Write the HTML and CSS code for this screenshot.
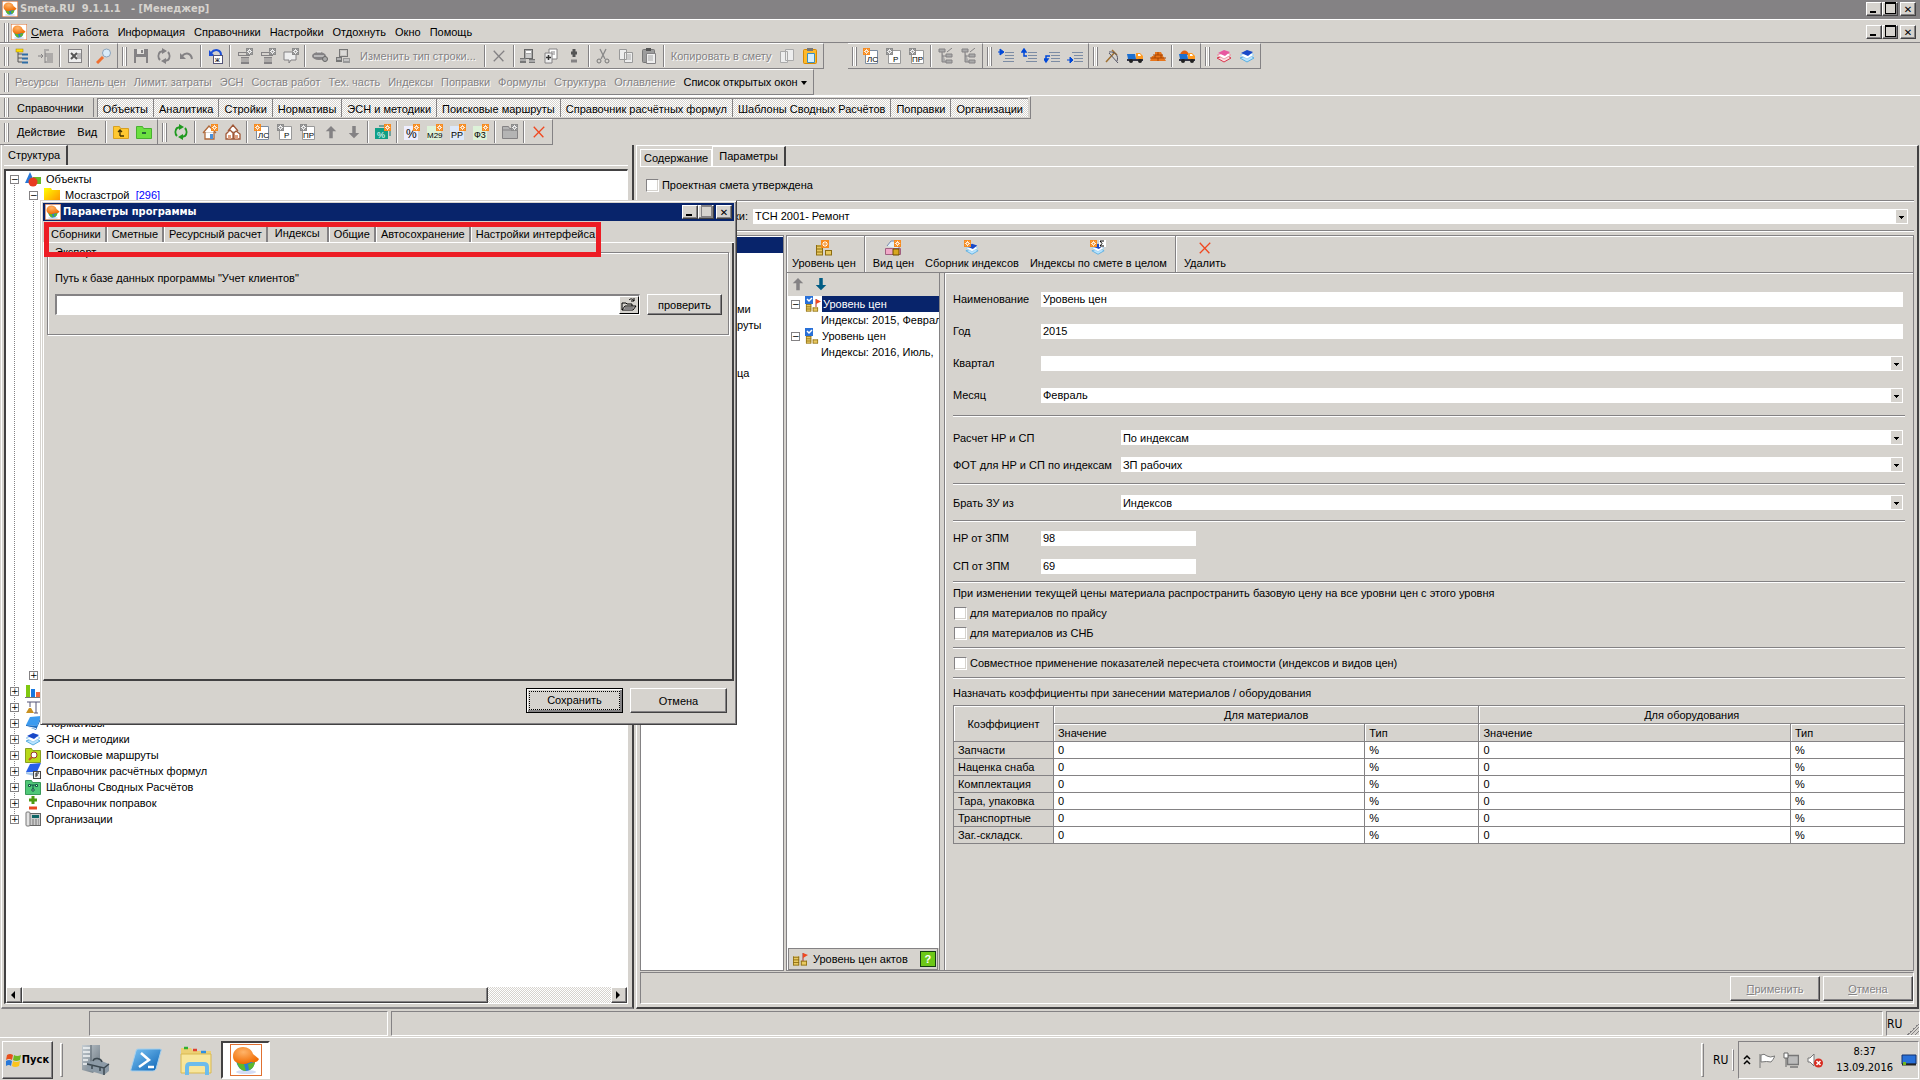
FILE: index.html
```html
<!DOCTYPE html>
<html lang="ru">

<head>
    <meta charset="UTF-8">
    <meta name="viewport" content="width=device-width, initial-scale=1.0">
    <title>Smeta.RU 9.1.1.1 - [Менеджер]</title>
    <link rel="stylesheet" href="styles.css">
</head>

<body>

    <!-- gradients -->
    <svg class="paints" aria-hidden="true">
        <defs>
            <radialGradient id="gOrange" cx="40%" cy="30%" r="70%"><stop offset="0" stop-color="#ffb469"/><stop offset="1" stop-color="#f06a00"/></radialGradient>
            <linearGradient id="gBlue" x1="0" y1="0" x2="1" y2="1"><stop offset="0" stop-color="#7cc4f4"/><stop offset="1" stop-color="#0a62b4"/></linearGradient>
            <linearGradient id="gFolder" x1="0" y1="0" x2="1" y2="1"><stop offset="0" stop-color="#ff0"/><stop offset="1" stop-color="#ff8a00"/></linearGradient>
            <linearGradient id="gSteel" x1="0" y1="0" x2="1" y2="1"><stop offset="0" stop-color="#c4ccd2"/><stop offset="1" stop-color="#66727c"/></linearGradient>
        </defs>
    </svg>

    <!-- icons -->
    <svg class="sprite" aria-hidden="true">
        <symbol id="logo" viewBox="0 0 32 32"><rect x=".5" y=".5" width="31" height="31" fill="#fff" stroke="#e07030"/><ellipse cx="16" cy="28" rx="10" ry="2" fill="#d4dcf4"/><path d="M6 16c1 7 5 11 10 11s8-4 9-9z" fill="#2a7fd0"/><path d="M7 18l7 2 2 7c-5 0-8-4-9-9zM18 20l7-2c-1 5-3 7-6 8z" fill="#5cb82a"/><path d="M3 12c0-5 4-9 10-9 5 0 9 3 10 7l6 5c-1 3-5 4-8 3-4 2-9 3-13 1-3-1-5-3-5-7z" fill="url(#gOrange)"/></symbol>
        <symbol id="new" viewBox="0 0 16 16"><rect width="16" height="16" fill="#f68b1f"/><path d="M8 2v12M2 8h12M4 4l8 8M12 4l-8 8" stroke="#fff" stroke-width="2"/><circle cx="8" cy="8" r="2" fill="#f68b1f"/></symbol>
        <symbol id="newg" viewBox="0 0 16 16"><rect width="16" height="16" fill="#8c8c8c"/><path d="M8 2v12M2 8h12M4 4l8 8M12 4l-8 8" stroke="#fff" stroke-width="2"/><circle cx="8" cy="8" r="2" fill="#8c8c8c"/></symbol>
        <symbol id="tree" viewBox="0 0 16 16"><rect x="1" y="1" width="7" height="3" fill="#ffe000" stroke="#a08000" stroke-width=".5"/><path d="M3 4v10h4M3 6h4M3 10h4" fill="none" stroke="#555"/><path d="M7 6.500h6M7 10.500h6M7 14.500h6" stroke="#2e6da4" stroke-width="2"/></symbol>
        <symbol id="treeg" viewBox="0 0 16 16"><path d="M0 8h5M3 6l2 2-2 2M6 2h5M7 3v12M7 6h8M7 8h8M9 10h6M9 12h6M7 14h8" fill="none" stroke="#848284"/></symbol>
        <symbol id="excel" viewBox="0 0 16 16"><rect x="1.500" y="1.500" width="13" height="13" fill="#eee" stroke="#848284"/><path d="M4 5l6 6M10 5l-6 6" stroke="#555" stroke-width="2"/><path d="M10 6h4M10 8h4M10 10h4" stroke="#848284"/></symbol>
        <symbol id="search" viewBox="0 0 16 16"><path d="M1 15l6-6" stroke="#f07030" stroke-width="3"/><circle cx="10.500" cy="5" r="4" fill="#d8ecfa" stroke="#8ca4bc"/></symbol>
        <symbol id="save" viewBox="0 0 16 16"><path d="M1 1h14v14H1z" fill="#848284"/><rect x="4" y="1" width="7" height="5" fill="#e4e2de"/><rect x="3" y="9" width="10" height="6" fill="#d6d3ce"/><path d="M9 2v3" stroke="#848284" stroke-width="2"/></symbol>
        <symbol id="sync" viewBox="0 0 16 16"><path d="M4 12a6 6 0 0 1 0-8l3-1M12 4a6 6 0 0 1 0 8l-3 1" fill="none" stroke="currentColor" stroke-width="2"/><path d="M6 0l5 3-5 3zM10 16l-5-3 5-3z" fill="currentColor"/></symbol>
        <symbol id="undo" viewBox="0 0 16 16"><path d="M3 8c4-4 9-3 10 3" fill="none" stroke="#848284" stroke-width="2"/><path d="M1 5v6h6z" fill="#848284"/></symbol>
        <symbol id="undoj" viewBox="0 0 16 16"><path d="M3 5c4-5 10-3 10 2" fill="none" stroke="#1c4fd6" stroke-width="2"/><path d="M1 2v6h6z" fill="#1c4fd6"/><rect x="5.500" y="7.500" width="9" height="8" fill="#fff" stroke="#557"/><text x="7" y="14" font-size="7">ж</text></symbol>
        <symbol id="rowg" viewBox="0 0 16 16"><rect x="1.500" y="4.500" width="11" height="3" fill="#d6d3ce" stroke="#848284"/><rect x="4" y="9" width="8" height="7" fill="#848284"/><path d="M4 11h8M4 13h8" stroke="#d6d3ce"/><use href="#newg" x="9" width="7" height="7"/></symbol>
        <symbol id="noteg" viewBox="0 0 16 16"><path d="M1 4h12v8H8l-2 3v-3H1z" fill="#eee" stroke="#848284"/><use href="#newg" x="9" width="7" height="7"/></symbol>
        <symbol id="eyeg" viewBox="0 0 16 16"><ellipse cx="7" cy="8" rx="7" ry="4" fill="#848284"/><path d="M2 8h10M5 4h4" stroke="#eee"/><circle cx="13" cy="11" r="2.500" fill="#aaa" stroke="#666"/></symbol>
        <symbol id="boxg" viewBox="0 0 16 16"><rect x="4.500" y="1.500" width="8" height="7" fill="#c8c6c2" stroke="#777"/><rect x="1" y="9" width="6" height="5" fill="#777"/><rect x="8" y="10" width="7" height="5" fill="#999"/><path d="M6 4h5M6 6h5M2 11h4M9 12h5" stroke="#eee"/></symbol>
        <symbol id="x" viewBox="0 0 16 16"><path d="M2 2l11 12M14 2L2 14" stroke="currentColor" stroke-width="1.500"/></symbol>
        <symbol id="calcg" viewBox="0 0 16 16"><rect x="4.500" y="1.500" width="8" height="9" fill="#aaa" stroke="#666"/><rect x="6" y="3" width="5" height="2" fill="#fff"/><path d="M6 7h5M6 9h5" stroke="#eee"/><rect x="0" y="10" width="6" height="5" fill="#777"/><rect x="9" y="11" width="6" height="4" fill="#777"/><path d="M0 12h6M9 13h6" stroke="#ddd"/></symbol>
        <symbol id="addpg" viewBox="0 0 16 16"><path d="M6 1h8v10H6z" fill="#fff" stroke="#848284"/><path d="M8 4h4M8 6h4" stroke="#848284"/><path d="M2 5h7v10H2z" fill="#eee" stroke="#848284"/><path d="M5.500 7v5M3 9.500h5" stroke="#333" stroke-width="1.500"/></symbol>
        <symbol id="pmg" viewBox="0 0 16 16"><path d="M8 1v8M5 5h6" stroke="#555" stroke-width="3"/><path d="M5 13h6" stroke="#848284" stroke-width="3"/></symbol>
        <symbol id="cut" viewBox="0 0 16 16"><path d="M5 1l5 10M11 1L6 11" stroke="#888" stroke-width="1.300"/><circle cx="4" cy="13" r="2" fill="none" stroke="#777"/><circle cx="12" cy="13" r="2" fill="none" stroke="#777"/></symbol>
        <symbol id="copyg" viewBox="0 0 16 16"><path d="M1.500 1.500h7v10h-7zM6.500 4.500h8v10h-8z" fill="#eee" stroke="#999"/><path d="M8 7h5M8 9h5M8 11h5" stroke="#aaa"/></symbol>
        <symbol id="pagesg" viewBox="0 0 16 16"><path d="M1.500 3.500h7v11h-7zM6.500 1.500h8v11h-8z" fill="#eee" stroke="#aaa"/></symbol>
        <symbol id="pasteg" viewBox="0 0 16 16"><rect x="1.500" y="1.500" width="12" height="13" rx="1" fill="#9c9c9c" stroke="#777"/><rect x="5" y="0" width="5" height="3" fill="#555"/><path d="M5.500 5.500h9v10h-9z" fill="#eee" stroke="#848284"/><path d="M7 8h5M7 10h5M7 12h5" stroke="#aaa"/></symbol>
        <symbol id="paste" viewBox="0 0 16 16"><rect x="1.500" y="1.500" width="13" height="14" rx="1" fill="#fdb92a" stroke="#d98a00"/><rect x="5" y="0" width="6" height="3" fill="#777"/><path d="M5.500 5.500h7v9h-7z" fill="#d5efff" stroke="#3a8fc0"/></symbol>
        <symbol id="ls" viewBox="0 0 16 16"><path d="M2.500 2.500h12v13h-12z" fill="#fff" stroke="#7c8ca0"/><text x="4" y="14" font-size="8">ЛС</text><use href="#new" width="7" height="7"/></symbol>
        <symbol id="rr" viewBox="0 0 16 16"><path d="M2.500 2.500h12v13h-12z" fill="#fff" stroke="#999"/><text x="7" y="14" font-size="8">Р</text><use href="#newg" width="7" height="7"/></symbol>
        <symbol id="pr" viewBox="0 0 16 16"><path d="M2.500 2.500h12v13h-12z" fill="#fff" stroke="#999"/><text x="3" y="14" font-size="8">ПР</text><use href="#newg" width="7" height="7"/></symbol>
        <symbol id="strg" viewBox="0 0 16 16"><path d="M1 1h6v3H1zM4 4v10h4M4 8h4M8 6h6v3H8zM8 12h6v3H8zM9 4l5-4" fill="#aaa" stroke="#848284"/></symbol>
        <symbol id="ind1" viewBox="0 0 16 16"><path d="M7 4.500h9M7 7.500h9M7 10.500h9M5 13.500h11" stroke="#7c8ca4"/><path d="M0 4h5M2 1l4 3-4 3z" stroke="#0048d8" fill="#0048d8"/></symbol>
        <symbol id="ind2" viewBox="0 0 16 16"><path d="M7 4.500h9M7 7.500h9M7 10.500h9M5 13.500h11" stroke="#7c8ca4"/><path d="M3 2v6h3M1 4l2-3 2 3z" stroke="#0048d8" fill="none" stroke-width="1.500"/></symbol>
        <symbol id="ind3" viewBox="0 0 16 16"><path d="M5 4.500h11M7 7.500h9M7 10.500h9M7 13.500h9" stroke="#7c8ca4"/><path d="M6 8H2v5M0 11l2 3 2-3z" stroke="#0048d8" fill="none" stroke-width="1.500"/></symbol>
        <symbol id="ind4" viewBox="0 0 16 16"><path d="M5 4.500h11M7 7.500h9M7 10.500h9M7 13.500h9" stroke="#7c8ca4"/><path d="M0 12h4M3 9l3 3-3 3z" stroke="#0048d8" fill="#0048d8"/></symbol>
        <symbol id="sickle" viewBox="0 0 16 16"><path d="M2 14L11 4M8 2l5 5" stroke="#a07030" stroke-width="1.500"/><path d="M5 4c6-1 10 4 8 9M5 5l9 10" fill="none" stroke="#556"/></symbol>
        <symbol id="truck" viewBox="0 0 16 16"><path d="M0 6h8l1 5H1z" fill="#1c6fd0"/><path d="M9 5h4l3 3v4H9z" fill="#ff9a20"/><path d="M11 6h2l1 2h-3z" fill="#fff"/><path d="M0 11h16v2H0z" fill="#334"/><circle cx="4" cy="13" r="2" fill="#222"/><circle cx="13" cy="13" r="2" fill="#222"/></symbol>
        <symbol id="bricks" viewBox="0 0 16 16"><path d="M5 4h6l2 4 3 5H0l2-5h3z" fill="#e8761c"/><path d="M0 10h16M3 7h10M8 4v3M5 7v3M11 7v3M8 10v3" stroke="#a84400"/></symbol>
        <symbol id="truckb" viewBox="0 0 16 16"><path d="M1 7c1-6 8-6 9 0z" fill="#e06010"/><use href="#truck" width="16" height="16"/></symbol>
        <symbol id="bookr" viewBox="0 0 16 16"><path d="M1 10l7 4 7-4-5-3z" fill="#ffdce2" stroke="#d8344c"/><path d="M1 7l7 4 7-4-5-3z" fill="#fff" stroke="#e8a0ac"/><path d="M2 5l6-3 6 2-5 4z" fill="#e858a0"/></symbol>
        <symbol id="book" viewBox="0 0 16 16"><path d="M1 10l7 4 7-4-5-3z" fill="#b8e4ff" stroke="#5aaee0"/><path d="M1 7l7 4 7-4-5-3z" fill="#fff" stroke="#a0d0f0"/><path d="M2 5l6-3 6 2-5 4z" fill="#1848c8"/></symbol>
        <symbol id="fup" viewBox="0 0 16 16"><path d="M.5 2.500h6l1 2h8v10H.5z" fill="#ffc830" stroke="#d8a020"/><path d="M7 12V6M5 8l2-2 2 2M7 12h4" fill="none" stroke="#443300" stroke-width="1.300"/></symbol>
        <symbol id="fmin" viewBox="0 0 16 16"><path d="M.5 2.500h6l1 2h8v10H.5z" fill="#6ce040" stroke="#48b030"/><path d="M6 9h4" stroke="#143" stroke-width="1.500"/></symbol>
        <symbol id="house" viewBox="0 0 16 16"><path d="M1 9l6-7 7 7M3 8v7h9V8" fill="#fff" stroke="#b06838" stroke-width="1.300"/><path d="M8 10h3v5H8z" fill="#4a90d8"/><use href="#new" x="9" width="7" height="7"/></symbol>
        <symbol id="houses" viewBox="0 0 16 16"><path d="M3 7l5-6 5 6M1 10l4-4 4 4v5H1zM8 10l3-3 4 3v5H8z" fill="#fff" stroke="#a05838" stroke-width="1.300"/><path d="M3 11h3v4H3zM10 11h3v4h-3z" fill="#e0a080"/></symbol>
        <symbol id="up" viewBox="0 0 16 16"><path d="M8 1l6 6h-4v8H6V7H2z" fill="currentColor"/></symbol>
        <symbol id="down" viewBox="0 0 16 16"><path d="M8 15l6-6h-4V1H6v8H2z" fill="currentColor"/></symbol>
        <symbol id="pctf" viewBox="0 0 16 16"><path d="M0 4h13v11H0z" fill="#0f9f86"/><path d="M4 2h11v10" fill="none" stroke="#0f6f66"/><text x="2" y="14" font-size="9" fill="#fff">%</text><use href="#new" x="9" width="7" height="7"/></symbol>
        <symbol id="pct" viewBox="0 0 16 16"><path d="M0 2h14v14H0z" fill="#eef"/><text x="2" y="14" font-size="12">%</text><use href="#new" x="9" width="7" height="7"/></symbol>
        <symbol id="m29" viewBox="0 0 16 16"><path d="M0 2h14v14H0z" fill="#ddf2d8"/><text x="0" y="14" font-size="8">М29</text><use href="#new" x="9" width="7" height="7"/></symbol>
        <symbol id="rr2" viewBox="0 0 16 16"><path d="M0 2h14v14H0z" fill="#dde8fa"/><text x="1" y="14" font-size="9">РР</text><use href="#new" x="9" width="7" height="7"/></symbol>
        <symbol id="f3" viewBox="0 0 16 16"><path d="M0 2h14v14H0z" fill="#ddf2d8"/><text x="1" y="14" font-size="9">Ф3</text><use href="#new" x="9" width="7" height="7"/></symbol>
        <symbol id="foldg" viewBox="0 0 16 16"><path d="M.5 2.500h6l1 2h8v10H.5z" fill="#b4b4b4" stroke="#848284"/><path d="M1 6h14" stroke="#848284"/><use href="#newg" x="9" width="7" height="7"/></symbol>
        <symbol id="shapes" viewBox="0 0 16 16"><path d="M0 12L5 1l5 11z" fill="#2878d8"/><rect x="8" y="6" width="8" height="7" fill="#68b828"/><circle cx="8" cy="11" r="4.500" fill="#e83c20"/></symbol>
        <symbol id="folder" viewBox="0 0 16 16"><path d="M0 1h7l1 2h8v13H0z" fill="url(#gFolder)"/></symbol>
        <symbol id="chart" viewBox="0 0 16 16"><path d="M1 2h4v12H1z" fill="#80c810"/><path d="M6 6h4v8H6z" fill="#1878e0"/><path d="M11 9h4v5h-4z" fill="#f06840"/><path d="M0 14.500h16" stroke="#777"/></symbol>
        <symbol id="crane" viewBox="0 0 16 16"><path d="M11 3v11M2 3h13M5 3v5M9 14h4" stroke="#557" /><path d="M1 14l3-5h2l3 5z" fill="#c89020"/></symbol>
        <symbol id="bookb" viewBox="0 0 16 16"><path d="M5 2l11-1-4 10L1 10z" fill="#3a9af0"/><path d="M1 10l11 1 4-10v3l-5 11-10-4z" fill="#1c6cc0"/><path d="M1 11l10 2v1L1 12z" fill="#fff"/></symbol>
        <symbol id="bookf" viewBox="0 0 16 16"><path d="M5 1l11-1-4 9L1 9z" fill="#2860e8"/><path d="M1 9l8 1v3l-8-2z" fill="#a8c8e8"/><rect x="8.500" y="8.500" width="7" height="7" fill="#eee" stroke="#444"/><path d="M11 14v-4h3M11 12h2" fill="none" stroke="#222"/></symbol>
        <symbol id="fsearch" viewBox="0 0 16 16"><path d="M.5 1.500h6l1 2h8v12H.5z" fill="#b8d818" stroke="#88a020"/><circle cx="9" cy="8" r="3" fill="#fff" stroke="#933"/><path d="M7 10l-3 3" stroke="#c06020" stroke-width="2"/></symbol>
        <symbol id="fscheme" viewBox="0 0 16 16"><path d="M.5 1.500h6l1 2h8v12H.5z" fill="#50c878" stroke="#389858"/><path d="M3.500 5.500h2v2h-2zM10.500 5.500h2v2h-2zM7 10h2v2H7zM6 6h4M8 6v4" fill="#dfd" stroke="#154"/></symbol>
        <symbol id="pm" viewBox="0 0 16 16"><path d="M8 1v8M4 5h8" stroke="#4c9a10" stroke-width="3"/><path d="M4 13h8" stroke="#e84820" stroke-width="3"/></symbol>
        <symbol id="phone" viewBox="0 0 16 16"><rect x="3.500" y="2.500" width="12" height="12" fill="#ccc" stroke="#666"/><rect x="1" y="1" width="4" height="14" rx="1" fill="#e4e4e4" stroke="#777"/><rect x="7" y="4" width="7" height="3" fill="#166"/><path d="M7 9h7M7 11h7M7 13h7" stroke="#777" stroke-dasharray="2 1"/></symbol>
        <symbol id="coins" viewBox="0 0 16 16"><path d="M0 5h7v10H0zM9 10h7v5H9z" fill="#e8c860"/><path d="M0 6h7M0 9h7M0 12h7M0 15h7M9 10.500h7M9 15h7M.5 5v10M6.500 5v10M9.500 10v5M15.500 10v5" stroke="#8c6c10"/></symbol>
        <symbol id="lvl" viewBox="0 0 16 16"><use href="#coins" width="16" height="16"/><use href="#new" x="5" width="8" height="8"/></symbol>
        <symbol id="kind" viewBox="0 0 16 16"><path d="M2 6l4-5h8v8" fill="#e0f0fa" stroke="#78a"/><path d="M.5 8.500h15v6H.5z" fill="#f0a8c8" stroke="#a06080"/><path d="M8 9h6v6H8z" fill="#d8a820" stroke="#6c4c00"/><use href="#new" x="9" width="7" height="7"/></symbol>
        <symbol id="ibook" viewBox="0 0 16 16"><use href="#book" y="2" width="16" height="14"/><use href="#new" width="7" height="7"/></symbol>
        <symbol id="isum" viewBox="0 0 16 16"><use href="#book" y="2" width="16" height="14"/><use href="#new" width="7" height="7"/><rect x="9" width="7" height="7" fill="#fff"/><path d="M14 1h-4l2 2.500L10 6h4" fill="none" stroke="#000"/></symbol>
        <symbol id="price" viewBox="0 0 16 16"><use href="#coins" y="4" width="14" height="12"/><rect width="8" height="8" fill="#2870d8"/><path d="M2 3l2 2 3-3" stroke="#fff" fill="none" stroke-width="1.500"/></symbol>
        <symbol id="pricef" viewBox="0 0 16 16"><use href="#price" width="16" height="16"/><path d="M11 3v8" stroke="#a33"/><path d="M11 3l5 2.500-5 2.500z" fill="#f04820"/></symbol>
        <symbol id="flag" viewBox="0 0 16 16"><use href="#coins" width="14" height="16"/><path d="M10 2v8" stroke="#a33"/><path d="M10 2l5 2-5 3z" fill="#f04820"/></symbol>
        <symbol id="open" viewBox="0 0 16 16"><path d="M1 13V6h4l1 1h5v2M1 13l3-4h11l-3 4zM8 3c2-2 4-1 5 1M13 1v3h-3" fill="none" stroke="#000"/><path d="M4 10h9l-2 3H3z" fill="#848284"/></symbol>
        <symbol id="win" viewBox="0 0 16 16"><path d="M1 3q3-2 6 0l-1 5q-3-2-6 0z" fill="#e8501c"/><path d="M8 3q3 2 7 0l-1 5q-4 2-7 0z" fill="#70b820"/><path d="M0 9q3-2 6 0l-1 5q-2-2-5 0z" fill="#2878d8"/><path d="M7 9q3 2 7 0l-1 5q-4 2-7 0z" fill="#fcc41c"/></symbol>
        <symbol id="server" viewBox="0 0 32 32"><path d="M2 1h18v20l-7 8-11-3z" fill="url(#gSteel)"/><path d="M3 4h7M3 8h7M3 12h7M3 16h5M3 20h4" stroke="#f4f6f8" stroke-width="1.500"/><path d="M11 1v24" stroke="#56626c"/><path d="M7 18l12-2 10 4v7l-5 4-17-5z" fill="#8c9aa6"/><path d="M7 20l17 4 5-4M24 24v7M13 17c1-4 8-3 9 1M12 21v4M20 23v4" fill="none" stroke="#3c4850" stroke-width="1.500"/></symbol>
        <symbol id="ps" viewBox="0 0 32 32"><path d="M8 5h22q2 0 1 2l-5 18q-1 2-3 2H2q-2 0-1-2L6 7q0-2 2-2z" fill="url(#gBlue)" stroke="#a8d0ec"/><path d="M11 9l8 7-10 7M18 23h6" fill="none" stroke="#fff" stroke-width="2.500"/></symbol>
        <symbol id="explorer" viewBox="0 0 32 32"><path d="M1 4h10l2 3h18v22H1z" fill="#ecd074"/><path d="M1 10h30v19H1z" fill="#f8e69c" stroke="#d8b850"/><path d="M4 4h4" stroke="#30b030" stroke-width="2.500"/><path d="M13 6h4" stroke="#e04030" stroke-width="2.500"/><path d="M21 8h5" stroke="#3090e0" stroke-width="2.500"/><path d="M7 31v-8q0-3 3-3h14q3 0 3 3v8" fill="none" stroke="#6cbcec" stroke-width="4"/></symbol>
        <symbol id="tflag" viewBox="0 0 16 16"><path d="M1 2v14" stroke="#777"/><path d="M2 3q3-2 6 1 3 2 8 0-2 4-4 6-4-1-10 0z" fill="#fff" stroke="#777"/></symbol>
        <symbol id="net" viewBox="0 0 16 16"><path d="M4.500 3.500h11v9h-11zM7 15h8" fill="#bbb" stroke="#777" stroke-width="1.500"/><path d="M1 1h4v5H1zM3 6v9" fill="#fff" stroke="#666"/></symbol>
        <symbol id="vol" viewBox="0 0 16 16"><path d="M1 6h2l4-4v12l-4-4H1z" fill="#fff" stroke="#777"/><circle cx="11.500" cy="11" r="4.500" fill="#d82c20"/><path d="M9.500 9l4 4M13.500 9l-4 4" stroke="#fff" stroke-width="1.500"/></symbol>
        <symbol id="desk" viewBox="0 0 16 16"><path d="M1 3h14v9H1z" fill="#2870d8" stroke="#103070"/><path d="M1 12.500h14" stroke="#222" stroke-width="2"/><path d="M2 10h3v3H2z" fill="#70b820"/></symbol>
    </svg>

    <header class="titlebar">
        <svg class="icon"><use href="#logo"/></svg>
        <h1>Smeta.RU&nbsp; 9.1.1.1&nbsp;&nbsp; - [Менеджер]</h1>
        <div class="winbtns">
            <button class="wb min" aria-label="Свернуть"></button>
            <button class="wb max" aria-label="Восстановить"></button>
            <button class="wb close" aria-label="Закрыть">✕</button>
        </div>
    </header>

    <nav class="menubar">
        <span class="grip"></span>
        <svg class="icon"><use href="#logo"/></svg>
        <button><u>С</u>мета</button>
        <button>Работа</button>
        <button>Информация</button>
        <button>Справочники</button>
        <button>Настройки</button>
        <button>Отдохнуть</button>
        <button>Окно</button>
        <button>Помощь</button>
        <div class="winbtns">
            <button class="wb min" aria-label="Свернуть окно"></button>
            <button class="wb max" aria-label="Восстановить окно"></button>
            <button class="wb close" aria-label="Закрыть окно">✕</button>
        </div>
    </nav>

    <div class="bar">
        <div class="tools">
            <span class="grip"></span>
            <button class="tb"><svg class="icon"><use href="#tree"/></svg></button>
            <button class="tb"><svg class="icon"><use href="#treeg"/></svg></button>
            <span class="sep"></span>
            <button class="tb"><svg class="icon"><use href="#excel"/></svg></button>
            <span class="sep"></span>
            <button class="tb"><svg class="icon"><use href="#search"/></svg></button>
        </div>
        <div class="tools">
            <span class="grip"></span>
            <button class="tb"><svg class="icon"><use href="#save"/></svg></button>
            <button class="tb gray"><svg class="icon"><use href="#sync"/></svg></button>
            <button class="tb"><svg class="icon"><use href="#undo"/></svg></button>
            <span class="sep"></span>
            <button class="tb"><svg class="icon"><use href="#undoj"/></svg></button>
            <span class="sep"></span>
            <button class="tb"><svg class="icon"><use href="#rowg"/></svg></button>
            <button class="tb"><svg class="icon"><use href="#rowg"/></svg></button>
            <button class="tb"><svg class="icon"><use href="#noteg"/></svg></button>
            <span class="sep"></span>
            <button class="tb"><svg class="icon"><use href="#eyeg"/></svg></button>
            <button class="tb"><svg class="icon"><use href="#boxg"/></svg></button>
            <button class="txt wide" disabled>Изменить тип строки...</button>
            <span class="sep"></span>
            <button class="tb gray"><svg class="icon small"><use href="#x"/></svg></button>
            <span class="sep"></span>
            <button class="tb"><svg class="icon"><use href="#calcg"/></svg></button>
            <button class="tb"><svg class="icon"><use href="#addpg"/></svg></button>
            <button class="tb"><svg class="icon"><use href="#pmg"/></svg></button>
            <span class="sep"></span>
            <button class="tb"><svg class="icon"><use href="#cut"/></svg></button>
            <button class="tb"><svg class="icon"><use href="#copyg"/></svg></button>
            <button class="tb"><svg class="icon"><use href="#pasteg"/></svg></button>
            <span class="sep"></span>
            <button class="txt" disabled>Копировать в смету</button>
            <button class="tb"><svg class="icon"><use href="#pagesg"/></svg></button>
            <button class="tb"><svg class="icon"><use href="#paste"/></svg></button>
        </div>
        <div class="tools apart">
            <span class="grip"></span>
            <button class="tb"><svg class="icon"><use href="#ls"/></svg></button>
            <button class="tb"><svg class="icon"><use href="#rr"/></svg></button>
            <button class="tb"><svg class="icon"><use href="#pr"/></svg></button>
            <span class="sep"></span>
            <button class="tb"><svg class="icon"><use href="#strg"/></svg></button>
            <button class="tb"><svg class="icon"><use href="#strg"/></svg></button>
        </div>
        <div class="tools">
            <span class="grip"></span>
            <button class="tb"><svg class="icon"><use href="#ind1"/></svg></button>
            <button class="tb"><svg class="icon"><use href="#ind2"/></svg></button>
            <button class="tb"><svg class="icon"><use href="#ind3"/></svg></button>
            <button class="tb"><svg class="icon"><use href="#ind4"/></svg></button>
        </div>
        <div class="tools">
            <span class="grip"></span>
            <button class="tb"><svg class="icon"><use href="#sickle"/></svg></button>
            <button class="tb"><svg class="icon"><use href="#truck"/></svg></button>
            <button class="tb"><svg class="icon"><use href="#bricks"/></svg></button>
            <span class="sep"></span>
            <button class="tb"><svg class="icon"><use href="#truckb"/></svg></button>
        </div>
        <div class="tools">
            <span class="grip"></span>
            <button class="tb"><svg class="icon"><use href="#bookr"/></svg></button>
            <button class="tb"><svg class="icon"><use href="#book"/></svg></button>
        </div>
    </div>

    <div class="bar">
        <div class="tools">
            <span class="grip"></span>
            <button class="txt" disabled>Ресурсы</button>
            <button class="txt" disabled>Панель цен</button>
            <button class="txt" disabled>Лимит. затраты</button>
            <button class="txt" disabled>ЭСН</button>
            <button class="txt" disabled>Состав работ</button>
            <button class="txt" disabled>Тех. часть</button>
            <button class="txt" disabled>Индексы</button>
            <button class="txt" disabled>Поправки</button>
            <button class="txt" disabled>Формулы</button>
            <button class="txt" disabled>Структура</button>
            <button class="txt" disabled>Оглавление</button>
            <button class="txt">Список открытых окон <span class="caret"></span></button>
        </div>
    </div>

    <div class="bar views">
        <div class="tools">
            <span class="grip"></span>
            <button class="view current">Справочники</button>
            <button class="view">Объекты</button>
            <button class="view">Аналитика</button>
            <button class="view">Стройки</button>
            <button class="view">Нормативы</button>
            <button class="view">ЭСН и методики</button>
            <button class="view">Поисковые маршруты</button>
            <button class="view">Справочник расчётных формул</button>
            <button class="view">Шаблоны Сводных Расчётов</button>
            <button class="view">Поправки</button>
            <button class="view">Организации</button>
        </div>
    </div>

    <div class="bar">
        <div class="tools">
            <span class="grip"></span>
            <button class="txt wide">Действие</button>
            <button class="txt wide">Вид</button>
            <span class="sep"></span>
            <button class="tb"><svg class="icon"><use href="#fup"/></svg></button>
            <button class="tb"><svg class="icon"><use href="#fmin"/></svg></button>
        </div>
        <div class="tools">
            <span class="grip"></span>
            <button class="tb green"><svg class="icon"><use href="#sync"/></svg></button>
            <span class="sep"></span>
            <button class="tb"><svg class="icon"><use href="#house"/></svg></button>
            <button class="tb"><svg class="icon"><use href="#houses"/></svg></button>
            <span class="sep"></span>
            <button class="tb"><svg class="icon"><use href="#ls"/></svg></button>
            <button class="tb"><svg class="icon"><use href="#rr"/></svg></button>
            <button class="tb"><svg class="icon"><use href="#pr"/></svg></button>
            <button class="tb gray"><svg class="icon small"><use href="#up"/></svg></button>
            <button class="tb gray"><svg class="icon small"><use href="#down"/></svg></button>
            <span class="sep"></span>
            <button class="tb"><svg class="icon"><use href="#pctf"/></svg></button>
            <span class="sep"></span>
            <button class="tb"><svg class="icon"><use href="#pct"/></svg></button>
            <button class="tb"><svg class="icon"><use href="#m29"/></svg></button>
            <button class="tb"><svg class="icon"><use href="#rr2"/></svg></button>
            <button class="tb"><svg class="icon"><use href="#f3"/></svg></button>
            <span class="sep"></span>
            <button class="tb"><svg class="icon"><use href="#foldg"/></svg></button>
            <span class="sep"></span>
            <button class="tb red"><svg class="icon small"><use href="#x"/></svg></button>
        </div>
    </div>

    <main class="workspace">
        <section class="left">
            <div class="tabs"><button class="tab active">Структура</button></div>
            <div class="tree-frame">
                <ul class="tree root">
                    <li><span class="exp">−</span><svg class="icon"><use href="#shapes"/></svg>Объекты</li>
                    <li class="sub"><span class="exp">−</span><svg class="icon"><use href="#folder"/></svg>Мосгазстрой  <span class="count">[296]</span></li>
                    <li class="gap"></li>
                    <li class="sub"><span class="exp">+</span></li>
                    <li><span class="exp">+</span><svg class="icon"><use href="#chart"/></svg></li>
                    <li><span class="exp">+</span><svg class="icon"><use href="#crane"/></svg></li>
                    <li><span class="exp">+</span><svg class="icon"><use href="#bookb"/></svg>Нормативы</li>
                    <li><span class="exp">+</span><svg class="icon"><use href="#book"/></svg>ЭСН и методики</li>
                    <li><span class="exp">+</span><svg class="icon"><use href="#fsearch"/></svg>Поисковые маршруты</li>
                    <li><span class="exp">+</span><svg class="icon"><use href="#bookf"/></svg>Справочник расчётных формул</li>
                    <li><span class="exp">+</span><svg class="icon"><use href="#fscheme"/></svg>Шаблоны Сводных Расчётов</li>
                    <li><span class="exp">+</span><svg class="icon"><use href="#pm"/></svg>Справочник поправок</li>
                    <li><span class="exp">+</span><svg class="icon"><use href="#phone"/></svg>Организации</li>
                </ul>
                <div class="hscroll">
                    <button class="arrow prev" aria-label="Влево"></button>
                    <div class="thumb"></div>
                    <button class="arrow next" aria-label="Вправо"></button>
                </div>
            </div>
        </section>

        <section class="right">
            <div class="tabs">
                <button class="tab">Содержание</button>
                <button class="tab active">Параметры</button>
            </div>
            <div class="approve">
                <label class="check"><input type="checkbox">Проектная смета утверждена</label>
            </div>
            <div class="norms">
                <label for="norms">Поправки:</label>
                <select id="norms"><option>ТСН 2001- Ремонт</option></select>
            </div>

            <div class="panes">
                <ul class="sections">
                    <li class="selected"></li>
                    <li></li>
                    <li></li>
                    <li></li>
                    <li>ми</li>
                    <li>руты</li>
                    <li></li>
                    <li></li>
                    <li>ца</li>
                </ul>
                <div class="detail">
                    <div class="actions">
                        <button><svg class="icon"><use href="#lvl"/></svg>Уровень цен</button>
                        <span class="sep"></span>
                        <button><svg class="icon"><use href="#kind"/></svg>Вид цен</button>
                        <button><svg class="icon"><use href="#ibook"/></svg>Сборник индексов</button>
                        <button><svg class="icon"><use href="#isum"/></svg>Индексы по смете в целом</button>
                        <span class="sep"></span>
                        <button class="red"><svg class="icon small"><use href="#x"/></svg><span>Удалить</span></button>
                    </div>
                    <div class="split">
                        <div class="levels">
                            <div class="movers">
                                <button class="tb gray"><svg class="icon small"><use href="#up"/></svg></button>
                                <button class="tb teal"><svg class="icon small"><use href="#down"/></svg></button>
                            </div>
                            <ul class="tree">
                                <li><span class="exp">−</span><svg class="icon"><use href="#pricef"/></svg><span class="picked">Уровень цен</span></li>
                                <li class="leaf">Индексы: 2015, Февраль</li>
                                <li><span class="exp">−</span><svg class="icon"><use href="#price"/></svg>Уровень цен</li>
                                <li class="leaf">Индексы: 2016, Июль,</li>
                            </ul>
                            <div class="acts">
                                <svg class="icon"><use href="#flag"/></svg>
                                <span>Уровень цен актов</span>
                                <button class="help">?</button>
                            </div>
                        </div>

                        <form class="params">
                            <div class="group first">
                                <div class="field"><label for="name">Наименование</label><input type="text" id="name" value="Уровень цен"></div>
                                <div class="field"><label for="year">Год</label><input type="text" id="year" value="2015"></div>
                                <div class="field"><label for="quarter">Квартал</label><select id="quarter"><option></option></select></div>
                                <div class="field"><label for="month">Месяц</label><select id="month"><option>Февраль</option></select></div>
                            </div>
                            <div class="group mid">
                                <div class="field long"><label for="calc">Расчет НР и СП</label><select id="calc"><option>По индексам</option></select></div>
                                <div class="field long"><label for="fot">ФОТ для НР и СП по индексам</label><select id="fot"><option>ЗП рабочих</option></select></div>
                            </div>
                            <div class="group">
                                <div class="field long"><label for="zu">Брать ЗУ из</label><select id="zu"><option>Индексов</option></select></div>
                            </div>
                            <div class="group tight">
                                <div class="field short"><label for="nr">НР от ЗПМ</label><input type="text" id="nr" value="98"></div>
                                <div class="field short"><label for="sp">СП от ЗПМ</label><input type="text" id="sp" value="69"></div>
                            </div>
                            <div class="group flush">
                                <p>При изменении текущей цены материала распространить базовую цену на все уровни цен с этого уровня</p>
                                <label class="check"><input type="checkbox">для материалов по прайсу</label>
                                <label class="check"><input type="checkbox">для материалов из СНБ</label>
                            </div>
                            <div class="group">
                                <label class="check"><input type="checkbox">Совместное применение показателей пересчета стоимости (индексов и видов цен)</label>
                            </div>
                            <div class="group">
                                <p>Назначать коэффициенты при занесении материалов / оборудования</p>
                                <table class="coef">
                                    <colgroup><col class="c-name"><col class="c-val"><col class="c-type"><col class="c-val"><col class="c-type"></colgroup>
                                    <thead>
                                        <tr><th rowspan="2">Коэффициент</th><th colspan="2">Для материалов</th><th colspan="2">Для оборудования</th></tr>
                                        <tr class="subhead"><th>Значение</th><th>Тип</th><th>Значение</th><th>Тип</th></tr>
                                    </thead>
                                    <tbody>
                                        <tr><th>Запчасти</th><td>0</td><td>%</td><td>0</td><td>%</td></tr>
                                        <tr><th>Наценка снаба</th><td>0</td><td>%</td><td>0</td><td>%</td></tr>
                                        <tr><th>Комплектация</th><td>0</td><td>%</td><td>0</td><td>%</td></tr>
                                        <tr><th>Тара, упаковка</th><td>0</td><td>%</td><td>0</td><td>%</td></tr>
                                        <tr><th>Транспортные</th><td>0</td><td>%</td><td>0</td><td>%</td></tr>
                                        <tr><th>Заг.-складск.</th><td>0</td><td>%</td><td>0</td><td>%</td></tr>
                                    </tbody>
                                </table>
                            </div>
                        </form>
                    </div>
                </div>
            </div>

            <div class="confirm">
                <button class="btn" disabled><u>П</u>рименить</button>
                <button class="btn" disabled><u>О</u>тмена</button>
            </div>
        </section>
    </main>

    <div class="statusbar">
        <span class="cell one"></span>
        <span class="cell two"></span>
        <span class="cell lang">RU</span>
    </div>

    <footer class="taskbar">
        <button class="start"><svg class="icon"><use href="#win"/></svg>Пуск</button>
        <span class="divider"></span>
        <div class="quick">
            <button><svg class="icon big"><use href="#server"/></svg></button>
            <button><svg class="icon big"><use href="#ps"/></svg></button>
            <button><svg class="icon big"><use href="#explorer"/></svg></button>
            <button class="running"><svg class="icon big"><use href="#logo"/></svg></button>
        </div>
        <span class="divider end"></span>
        <span class="lang">RU</span>
        <span class="divider slim"></span>
        <div class="tray">
            <svg class="icon chevrons" viewBox="0 0 8 12"><path d="M1 5l3-3 3 3M1 10l3-3 3 3" fill="none" stroke="#000" stroke-width="1.500"/></svg>
            <svg class="icon"><use href="#tflag"/></svg>
            <svg class="icon"><use href="#net"/></svg>
            <svg class="icon"><use href="#vol"/></svg>
            <div class="clock">8:37<br>13.09.2016</div>
            <svg class="icon"><use href="#desk"/></svg>
        </div>
    </footer>

    <div class="dialog" role="dialog" aria-label="Параметры программы">
        <div class="dialog-title">
            <svg class="icon"><use href="#logo"/></svg>
            <h2>Параметры программы</h2>
            <div class="winbtns">
                <button class="wb min" aria-label="Свернуть"></button>
                <button class="wb max off" aria-label="Развернуть" disabled></button>
                <button class="wb close" aria-label="Закрыть">✕</button>
            </div>
        </div>
        <div class="dialog-tabs">
            <button>Сборники</button>
            <button>Сметные</button>
            <button>Ресурсный расчет</button>
            <button class="active">Индексы</button>
            <button>Общие</button>
            <button>Автосохранение</button>
            <button>Настройки интерфейса</button>
        </div>
        <div class="dialog-page">
            <fieldset>
                <legend>Экспорт</legend>
                <label for="dbpath">Путь к базе данных программы "Учет клиентов"</label>
                <div class="path-row">
                    <div class="path">
                        <input type="text" id="dbpath">
                        <button aria-label="Обзор"><svg class="icon"><use href="#open"/></svg></button>
                    </div>
                    <button class="btn">проверить</button>
                </div>
            </fieldset>
        </div>
        <div class="dialog-footer">
            <button class="btn default"><span>Сохранить</span></button>
            <button class="btn">Отмена</button>
        </div>
        <div class="marker"></div>
    </div>

</body>

</html>
```
FILE: styles.css
```css
* {
    box-sizing: border-box;
}

body {
    margin: 0;
    height: 100vh;
    display: flex;
    flex-direction: column;
    overflow: hidden;
    background: #d6d3ce;
    color: #000;
    font: 11px/14px "Liberation Sans", Arial, sans-serif;
}

h1,
h2,
p,
ul {
    margin: 0;
    padding: 0;
    list-style: none;
}

button,
input,
select {
    margin: 0;
    padding: 0;
    border: 0;
    border-radius: 0;
    background: none;
    color: inherit;
    font: inherit;
    white-space: nowrap;
}

.paints {
    position: absolute;
    width: 0;
    height: 0;
}

.sprite {
    display: none;
}

.icon {
    display: block;
    flex: none;
    width: 16px;
    height: 16px;
}

.icon.small {
    width: 14px;
    height: 14px;
}

.icon.big {
    width: 32px;
    height: 32px;
}

.gray { color: #848284; }
.green { color: #1f9a1f; }
.red { color: #f04820; }
.teal { color: #005c84; }

.clock,
.lang {
    font-family: "DejaVu Sans Condensed", "Noto Sans", sans-serif;
}

/* title bars */
.titlebar {
    display: flex;
    align-items: center;
    gap: 2px;
    height: 18px;
    padding: 0 4px 0 2px;
    background: #848284;
    color: #d6d3ce;
}

.titlebar h1,
.dialog-title h2 {
    font: bold 11px/16px "DejaVu Sans Condensed", "Noto Sans", sans-serif;
}

.winbtns {
    display: flex;
    margin-left: auto;
}

.wb {
    position: relative;
    width: 16px;
    height: 14px;
    background: #d6d3ce;
    color: #000;
    border: 1px solid;
    border-color: #fff #424142 #424142 #fff;
    box-shadow: inset -1px -1px #848284;
    font: bold 10px/11px "DejaVu Sans", sans-serif;
}

.wb.close {
    margin-left: 2px;
}

.wb.min::after,
.wb.max::after {
    content: "";
    position: absolute;
    left: 3px;
    bottom: 2px;
    width: 6px;
    height: 2px;
    background: #000;
}

.wb.max::after {
    width: 9px;
    height: 9px;
    bottom: 1px;
    left: 2px;
    background: none;
    border: 1px solid #000;
    border-top-width: 2px;
}

.wb.max.off::after {
    border-color: #848284;
}

/* menu and toolbars */
.menubar {
    display: flex;
    align-items: center;
    height: 25px;
    padding: 3px 4px 0;
    border: solid #848284;
    border-width: 1px 0;
    box-shadow: inset 0 1px #fff;
}

.menubar > button {
    padding: 0 5px 0 4px;
}

.grip {
    flex: none;
    width: 5px;
    height: 19px;
    margin-right: 2px;
    border: solid;
    border-width: 0 1px;
    border-color: #848284;
    box-shadow: inset 1px 0 #fff, inset -1px 0 #fff;
}

.bar {
    display: flex;
    height: 26px;
}

.tools {
    display: flex;
    align-items: center;
    padding: 0 2px 0 4px;
    border-top: 1px solid #fff;
    border-right: 1px solid #848284;
    border-bottom: 1px solid #848284;
}

.tools.apart {
    margin-left: 24px;
}

.tb {
    display: flex;
    flex: none;
    align-items: center;
    justify-content: center;
    width: 23px;
    height: 22px;
}

.sep {
    flex: none;
    width: 6px;
    height: 22px;
    border-left: 2px solid transparent;
    box-shadow: inset 1px 0 #848284, inset 2px 0 #fff;
}

.txt {
    padding: 0 4px;
}

.txt.wide {
    padding: 0 6px;
}

button:disabled {
    color: #848284;
    text-shadow: 1px 1px #fff;
}

.caret {
    display: inline-block;
    vertical-align: middle;
    border: solid transparent;
    border-width: 4px 3px 0;
    border-top-color: #000;
}

.views {
    height: 24px;
    border-top: 1px solid #fff;
}

.view {
    height: 19px;
    padding: 2px 5px 0;
    border-left: 1px solid #848284;
    border-top: 1px solid #848284;
    background: repeating-conic-gradient(#fff 0 25%, #d6d3ce 0 50%) 0 0 / 2px 2px;
}

.view.current {
    margin-right: 3px;
    padding: 0 9px 0 6px;
    border-width: 0 1px 0 0;
    border-right: 1px solid #848284;
    background: #d6d3ce;
}

/* workspace */
.workspace {
    display: flex;
    flex: 1;
    min-height: 0;
    gap: 2px;
    padding: 0 1px;
}

.left {
    display: flex;
    flex: 0 0 33%;
    flex-direction: column;
    padding: 0 4px 3px 2px;
    border-right: 2px solid #424142;
    border-bottom: 2px solid #848284;
    border-left: 1px solid #fff;
}

.tabs {
    display: flex;
    flex: none;
    align-items: flex-end;
    height: 21px;
    border-bottom: 1px solid #fff;
}

.tab {
    height: 17px;
    padding: 0 3px;
    border: solid #fff;
    border-width: 1px 1px 0;
}

.tab.active {
    height: 20px;
    padding: 0 6px 2px;
    border-right: 2px solid #424142;
}

.left .tab.active {
    padding-left: 4px;
    border-left: 0;
}

.tree-frame {
    display: flex;
    flex: 1;
    flex-direction: column;
    min-height: 0;
    margin-top: 3px;
    border: solid;
    border-width: 2px 1px 1px 2px;
    border-color: #424142 #fff #fff #424142;
    background: #fff;
}

.tree {
    flex: 1;
    min-height: 0;
    overflow: hidden;
    background: #fff;
}

.root {
    background: repeating-linear-gradient(#848284 0 1px, transparent 1px 2px) 8px 8px / 1px 640px no-repeat, repeating-linear-gradient(#848284 0 1px, transparent 1px 2px) 27px 24px / 1px 480px no-repeat, #fff;
}

.tree li {
    display: flex;
    align-items: center;
    height: 16px;
    padding-left: 4px;
    white-space: pre;
}

.tree .sub {
    padding-left: 23px;
}

.tree .gap {
    height: 464px;
}

.tree .leaf {
    padding-left: 34px;
}

.tree .icon {
    margin-right: 5px;
}

.exp {
    flex: none;
    width: 9px;
    height: 9px;
    margin-right: 6px;
    border: 1px solid #848284;
    background: #fff;
    font: 9px/7px "DejaVu Sans", sans-serif;
    text-align: center;
    box-shadow: 2px 0 #fff;
}

.count {
    color: #00f;
}

.hscroll {
    display: flex;
    height: 16px;
    background: repeating-conic-gradient(#fff 0 25%, #d6d3ce 0 50%) 0 0 / 2px 2px;
}

.thumb,
.arrow,
.btn {
    background: #d6d3ce;
    border: 1px solid;
    border-color: #fff #424142 #424142 #fff;
    box-shadow: inset -1px -1px #848284;
}

.thumb {
    width: 75%;
}

.arrow {
    width: 16px;
    padding-left: 4px;
}

.arrow.next {
    margin-left: auto;
}

.arrow::after {
    content: "";
    display: block;
    width: 0;
    border: solid transparent;
    border-width: 4px 0 4px 4px;
    border-left-color: #000;
}

.arrow.prev::after {
    border-width: 4px 4px 4px 0;
    border-right-color: #000;
}

.right {
    display: flex;
    flex: 1;
    flex-direction: column;
    min-width: 0;
    padding: 0 3px 3px;
    border: solid;
    border-width: 1px 2px 2px 1px;
    border-color: #fff #424142 #424142 #fff;
}

.approve {
    padding: 8px 6px 6px;
    border-bottom: 1px solid #fff;
    box-shadow: inset 0 -1px #848284;
}

.check {
    display: flex;
    align-items: center;
    gap: 3px;
    height: 20px;
}

.check input {
    appearance: none;
    width: 13px;
    height: 13px;
    background: #fff;
    border: 1px solid;
    border-color: #848284 #fff #fff #848284;
    box-shadow: inset -1px -1px #d6d3ce;
}

.norms {
    display: flex;
    align-items: center;
    gap: 5px;
    height: 30px;
    padding: 0 6px 1px 56px;
    border-bottom: 1px solid #fff;
    box-shadow: inset 0 -1px #848284;
}

.norms select {
    flex: 1;
}

input[type="text"],
select {
    height: 15px;
    padding: 0 2px;
    background: #fff;
}

/* small black arrow on a gray button at the right end */
select {
    appearance: none;
    background: linear-gradient(#000, #000) right 4px center / 5px 1px no-repeat, linear-gradient(#000, #000) right 5px top 8px / 3px 1px no-repeat, linear-gradient(#000, #000) right 6px top 9px / 1px 1px no-repeat, linear-gradient(#d6d3ce, #d6d3ce) right 1px center / 11px 13px no-repeat, #fff;
}

.panes {
    display: flex;
    flex: 1;
    min-height: 0;
    gap: 2px;
    margin-top: 3px;
}

.sections {
    flex: 0 0 144px;
    padding-top: 1px;
    border: 1px solid #848284;
    background: #fff;
}

.sections li {
    height: 16px;
    padding-left: 96px;
    line-height: 16px;
}

.sections .selected {
    background: #08246b;
}

.detail {
    display: flex;
    flex: 1;
    flex-direction: column;
    min-width: 0;
    border: 1px solid #848284;
    box-shadow: inset 1px 1px #fff;
}

.actions {
    display: flex;
    flex: none;
    height: 36px;
}

.actions button {
    padding: 2px 6px 0 5px;
}

.actions .icon {
    margin: 0 auto;
    height: 16px;
}

.actions span:not(.sep) {
    color: #000;
}

.actions .sep {
    height: 100%;
}

.split {
    display: flex;
    flex: 1;
    min-height: 0;
    gap: 4px;
    border-top: 1px solid #848284;
}

.levels {
    display: flex;
    flex: 0 0 153px;
    flex-direction: column;
    min-width: 0;
    border-right: 1px solid #848284;
}

.movers {
    display: flex;
    flex: none;
    height: 23px;
}

.levels .tree .icon {
    margin-right: 0;
}

.levels .tree li {
    gap: 1px;
}

.levels .tree .exp {
    margin-right: 4px;
}

.picked {
    flex: 1;
    padding-left: 1px;
    background: #08246b;
    color: #fff;
    line-height: 16px;
}

.acts {
    display: flex;
    align-items: center;
    gap: 4px;
    height: 22px;
    margin: 0 1px;
    padding: 0 1px 0 4px;
    border: 1px solid #848284;
    background: #d6d3ce;
}

.help {
    width: 16px;
    height: 16px;
    margin-left: auto;
    border: 1px solid #143c14;
    background: #6cc818;
    color: #fff;
    font-weight: bold;
}

/* parameters form */
.params {
    flex: 1;
    min-width: 0;
    padding: 0 8px;
    border-left: 1px solid #848284;
    box-shadow: inset 1px 1px #fff;
}

.group {
    padding: 5px 0 4px;
    border-top: 1px solid #848284;
    box-shadow: inset 0 1px #fff;
}

.group.first {
    padding-top: 10px;
    border-top: 0;
    box-shadow: none;
}

.group.mid {
    padding: 8px 0 5px;
}

.group.tight {
    padding: 3px 0 1px;
}

.group.flush {
    padding-top: 1px;
}

.group p {
    line-height: 20px;
}

.group .check {
    padding-left: 1px;
}

.field {
    display: grid;
    grid-template-columns: 88px 1fr;
    align-items: center;
    height: 27px;
    padding-right: 2px;
}

.first .field {
    height: 32px;
}

.field.long {
    grid-template-columns: 168px 1fr;
}

.field.short {
    grid-template-columns: 88px 155px;
    height: 28px;
}

.coef {
    width: 100%;
    margin-top: 2px;
    table-layout: fixed;
    border-collapse: collapse;
}

.c-name { width: 100px; }
.c-type { width: 12%; }

.coef th,
.coef td {
    height: 17px;
    padding: 0 4px;
    border: 1px solid #848284;
    line-height: 14px;
    font-weight: normal;
    text-align: left;
}

.coef thead th {
    height: 18px;
    text-align: center;
    box-shadow: inset 1px 1px #fff;
}

.coef .subhead th {
    text-align: left;
}

.coef td {
    background: #fff;
}

.confirm {
    display: flex;
    justify-content: flex-end;
    gap: 3px;
    margin-top: 1px;
    padding: 3px 0 2px;
    border: 1px solid;
    border-color: #848284 #fff #fff #848284;
}

.btn {
    width: 90px;
    height: 25px;
}

/* status bar and taskbar */
.statusbar {
    display: flex;
    gap: 3px;
    height: 28px;
    padding: 2px 0 1px 89px;
}

.cell {
    border: 1px solid;
    border-color: #848284 #fff #fff #848284;
}

.cell.one {
    flex: 0 0 299px;
}

.cell.two {
    flex: 1;
}

.cell.lang {
    width: 34px;
    line-height: 24px;
    background: linear-gradient(135deg, transparent 50%, #848284 50% 55%, #d6d3ce 55% 65%, #848284 65% 70%, #d6d3ce 70% 80%, #848284 80% 85%, transparent 85%) right bottom / 12px 12px no-repeat;
}

.taskbar {
    display: flex;
    align-items: center;
    height: 43px;
    padding: 1px 1px 0 2px;
    border-top: 1px solid #fff;
}

.start {
    display: flex;
    align-items: center;
    justify-content: center;
    width: 51px;
    height: 38px;
    border: 1px solid;
    border-color: #fff #424142 #424142 #fff;
    box-shadow: inset -1px -1px #848284;
    font: bold 11px/14px "DejaVu Sans Condensed", "Noto Sans", sans-serif;
}

.divider {
    width: 3px;
    height: 34px;
    margin: 0 8px 0 7px;
    border: 1px solid;
    border-color: #fff #848284 #848284 #fff;
}

.divider.end {
    margin: 0 9px 0 auto;
}

.divider.slim {
    width: 2px;
    height: 22px;
    margin: 0 4px;
}

.quick {
    display: flex;
    gap: 1px;
}

.quick button {
    display: flex;
    align-items: center;
    justify-content: center;
    width: 49px;
    height: 38px;
}

.quick .running {
    border: 2px solid;
    border-color: #424142 #fff #fff #424142;
    background: #fff;
}

.lang {
    font-size: 12px;
}

.tray {
    display: flex;
    align-items: center;
    gap: 8px;
    height: 38px;
    padding: 0 1px 0 4px;
    border: 1px solid;
    border-color: #848284 #fff #fff #848284;
}

.chevrons {
    width: 8px;
    height: 12px;
}

.clock {
    margin-left: 5px;
    font-size: 11px;
    line-height: 16px;
    text-align: center;
}

/* program settings window */
.dialog {
    position: absolute;
    left: 40px;
    top: 200px;
    display: flex;
    flex-direction: column;
    width: 697px;
    height: 525px;
    padding: 2px;
    background: #d6d3ce;
    border: 1px solid;
    border-color: #d6d3ce #424142 #424142 #d6d3ce;
    box-shadow: inset 1px 1px #fff, inset -1px -1px #848284;
}

.dialog-title {
    display: flex;
    align-items: center;
    gap: 2px;
    height: 18px;
    padding: 0 2px;
    background: #08246b;
    color: #fff;
}

.dialog-tabs {
    display: flex;
    align-items: flex-end;
    height: 22px;
    padding-left: 4px;
    border-bottom: 1px solid #fff;
}

.dialog-tabs button {
    height: 16px;
    padding: 0 4px;
    border-left: 1px solid #fff;
    border-right: 2px solid #848284;
}

.dialog-tabs .active {
    height: 17px;
    padding: 0 7px 2px;
}

.dialog-tabs button:first-child,
.dialog-tabs .active {
    border-left: 0;
}

.dialog-tabs button:last-child {
    border-right: 0;
}

.dialog-page {
    flex: 1;
    padding: 2px 3px;
    border: solid;
    border-width: 0 2px 2px 1px;
    border-color: #fff #424142 #424142 #fff;
}

fieldset {
    margin: 0;
    padding: 12px 6px 19px 7px;
    border: 1px solid #848284;
    box-shadow: 1px 1px #fff, inset 1px 1px #fff;
}

legend {
    padding: 0 2px 0 0;
    background: #d6d3ce;
}

fieldset label {
    display: block;
    margin-bottom: 9px;
}

.path-row {
    display: flex;
    gap: 7px;
}

.path {
    display: flex;
    flex: 1;
    border: solid;
    border-width: 2px 1px 1px 2px;
    border-color: #848284 #fff #fff #848284;
    background: #fff;
}

.path input {
    flex: 1;
    min-width: 0;
}

.path button {
    width: 20px;
    padding: 0 1px;
    background: #d6d3ce;
    border: 1px solid;
    border-color: #fff #000 #000 #fff;
}

.path-row .btn {
    width: 75px;
    height: 21px;
}

.dialog-footer {
    display: flex;
    justify-content: flex-end;
    gap: 7px;
    padding: 7px 7px 9px;
}

.dialog-footer .btn {
    width: 97px;
}

.btn.default {
    padding: 2px;
    border: 1px solid #000;
    box-shadow: inset 1px 1px #fff, inset -2px -2px #848284;
}

.btn.default span {
    display: block;
    border: 1px dotted #000;
    line-height: 17px;
}

.marker {
    position: absolute;
    left: 3px;
    top: 21px;
    width: 557px;
    height: 35px;
    border: 5px solid #ed1c24;
    pointer-events: none;
}
```
